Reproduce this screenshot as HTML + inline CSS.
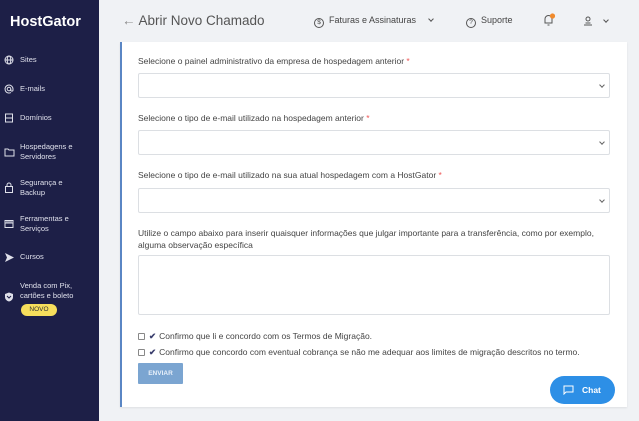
<!DOCTYPE html>
<html><head><meta charset="utf-8"><style>
*{box-sizing:border-box;margin:0;padding:0}
body{width:639px;height:421px;overflow:hidden;background:#f0f2f5;font-family:"Liberation Sans",sans-serif;position:relative}
.sb{position:absolute;left:0;top:0;width:99px;height:421px;background:#1d1f47;color:#e6e7f0}
.logo{position:absolute;left:10px;top:14px;font-size:14.5px;font-weight:bold;color:#fff}
.it{position:absolute;left:4px;font-size:7.5px;line-height:10px;color:#e0e1ec}
.it svg{position:absolute;left:0;top:0}
.it span{position:absolute;left:16px;white-space:nowrap}
.novo{position:absolute;left:21px;top:304px;width:36px;height:12px;border-radius:6px;background:#f6de5c;color:#333;font-size:6.5px;text-align:center;line-height:12px}
.hdr{position:absolute;left:122px;top:13px;font-size:13.5px;color:#555}
.top{position:absolute;top:15px;font-size:9px;color:#444}
.chev{position:absolute;width:4px;height:4px;border-right:1px solid #555;border-bottom:1px solid #555;transform:rotate(45deg)}
.card{position:absolute;left:120px;top:42px;width:507px;height:365px;background:#fff;border-left:2px solid #5a86c4;box-shadow:0 1px 2px rgba(0,0,0,.08)}
.lab{position:absolute;left:138px;font-size:8.5px;color:#444;line-height:12px}
.lab b{color:#e55;font-weight:normal}
.sel{position:absolute;left:138px;width:472px;height:25px;border:1px solid #dcdfe3;background:#fff;border-radius:2px}
.sel:after{content:"";position:absolute;right:5px;top:9px;width:3px;height:3px;border-right:1px solid #666;border-bottom:1px solid #666;transform:rotate(45deg)}
.ta{position:absolute;left:138px;top:255px;width:472px;height:60px;border:1px solid #dcdfe3;border-radius:2px}
.cb{position:absolute;left:138px;font-size:8.5px;color:#444;white-space:nowrap}
.cb i{display:inline-block;width:7px;height:7px;border:1px solid #888;border-radius:1px;vertical-align:-1px;margin-right:4px}
.cb em{font-style:normal;color:#3b3f6e;font-weight:bold;margin-right:3px}
.btn{position:absolute;left:138px;top:363px;width:45px;height:21px;background:#7ba5d1;color:#e8f0fa;font-size:6.5px;font-weight:bold;text-align:center;line-height:21px;border-radius:1px}
.chat{position:absolute;left:550px;top:376px;width:65px;height:28px;border-radius:14px;background:#2d8fe6;color:#fff;font-size:8.5px;font-weight:bold}
</style></head><body>
<div class="sb">
<div class="logo">HostGator</div>
<div class="it" style="top:55px"><svg width="10" height="10" viewBox="0 0 10 10" fill="none" stroke="#dfe0ea" stroke-width="1"><circle cx="5" cy="5" r="4"/><ellipse cx="5" cy="5" rx="1.8" ry="4"/><path d="M1 5h8"/></svg><span style="top:0">Sites</span></div>
<div class="it" style="top:84px"><svg width="10" height="10" viewBox="0 0 10 10" fill="none" stroke="#dfe0ea" stroke-width="1"><circle cx="5" cy="5" r="1.8"/><path d="M6.8 5v1c0 1.5 2.2 1.5 2.2 0V5A4 4 0 1 0 7 8.5"/></svg><span style="top:0">E-mails</span></div>
<div class="it" style="top:113px"><svg width="10" height="10" viewBox="0 0 10 10" fill="none" stroke="#dfe0ea" stroke-width="1"><rect x="1.5" y="1" width="7" height="8"/><path d="M1.5 5h7"/></svg><span style="top:0">Domínios</span></div>
<div class="it" style="top:142px"><svg width="11" height="10" viewBox="0 0 11 10" fill="none" stroke="#dfe0ea" stroke-width="1" style="top:5px"><path d="M1 2h3l1 1h5v6H1z"/></svg><span style="top:0">Hospedagens e<br>Servidores</span></div>
<div class="it" style="top:178px"><svg width="10" height="11" viewBox="0 0 10 11" fill="none" stroke="#dfe0ea" stroke-width="1" style="top:4px"><rect x="1.5" y="4.5" width="7" height="6"/><path d="M3 4.5V3a2 2 0 0 1 4 0v1.5"/></svg><span style="top:0">Segurança e<br>Backup</span></div>
<div class="it" style="top:214px"><svg width="10" height="10" viewBox="0 0 10 10" fill="none" stroke="#dfe0ea" stroke-width="1" style="top:5px"><rect x="1" y="1.5" width="8" height="7"/><path d="M1 4h8M3 1.5V4M5 1.5V4M7 1.5V4"/></svg><span style="top:0">Ferramentas e<br>Serviços</span></div>
<div class="it" style="top:252px"><svg width="11" height="11" viewBox="0 0 11 11"><path d="M1 1l9 4.5L1 10l2-4.5z" fill="#dfe0ea"/></svg><span style="top:0">Cursos</span></div>
<div class="it" style="top:281px"><svg width="10" height="10" viewBox="0 0 10 10" style="top:11px"><path d="M5 .5l4 1.5v3c0 2.5-2 4-4 4.5C3 9 1 7.5 1 5V2z" fill="#dfe0ea"/><path d="M3 4l2 2 2-2" stroke="#1d1f47" fill="none"/></svg><span style="top:0">Venda com Pix,<br>cartões e boleto</span></div>
<div class="novo">NOVO</div>
</div>
<div class="hdr"><span style="color:#888">←</span> Abrir Novo Chamado</div>
<div class="top" style="left:314px"><span style="display:inline-block;width:10px;height:10px;border:1px solid #555;border-radius:50%;font-size:6.5px;text-align:center;line-height:8px;vertical-align:-1px">$</span>&nbsp; Faturas e Assinaturas</div>
<div class="chev" style="left:429px;top:17px"></div>
<div class="top" style="left:466px"><span style="display:inline-block;width:10px;height:10px;border:1px solid #555;border-radius:50%;font-size:6.5px;text-align:center;line-height:8px;vertical-align:-1px">?</span>&nbsp; Suporte</div>
<svg style="position:absolute;left:543px;top:12px" width="14" height="15" viewBox="0 0 14 15" fill="none" stroke="#555"><path d="M2 11h7V7a3.5 3.5 0 0 0-7 0z M4.5 13h2"/><circle cx="9.5" cy="4" r="2.6" fill="#f08a2c" stroke="none"/></svg>
<svg style="position:absolute;left:583px;top:16px" width="10" height="10" viewBox="0 0 10 10" fill="none" stroke="#555"><circle cx="5" cy="3" r="2"/><path d="M1 9h8M2.5 7h5"/></svg>
<div class="chev" style="left:604px;top:18px"></div>
<div class="card"></div>
<div class="lab" style="top:55px">Selecione o painel administrativo da empresa de hospedagem anterior <b>*</b></div>
<div class="sel" style="top:73px"></div>
<div class="lab" style="top:112px">Selecione o tipo de e-mail utilizado na hospedagem anterior <b>*</b></div>
<div class="sel" style="top:130px"></div>
<div class="lab" style="top:169px">Selecione o tipo de e-mail utilizado na sua atual hospedagem com a HostGator <b>*</b></div>
<div class="sel" style="top:188px"></div>
<div class="lab" style="top:227px">Utilize o campo abaixo para inserir quaisquer informações que julgar importante para a transferência, como por exemplo,<br>alguma observação específica</div>
<div class="ta"></div>
<div class="cb" style="top:331px"><i></i><em>✔</em>Confirmo que li e concordo com os Termos de Migração.</div>
<div class="cb" style="top:347px"><i></i><em>✔</em>Confirmo que concordo com eventual cobrança se não me adequar aos limites de migração descritos no termo.</div>
<div class="btn">ENVIAR</div>
<div class="chat"><svg style="position:absolute;left:13px;top:9px" width="11" height="10" viewBox="0 0 11 10" fill="none" stroke="#fff"><path d="M1 1h9v6H3L1 9z"/></svg><span style="position:absolute;left:32px;top:9px">Chat</span></div>
</body></html>
